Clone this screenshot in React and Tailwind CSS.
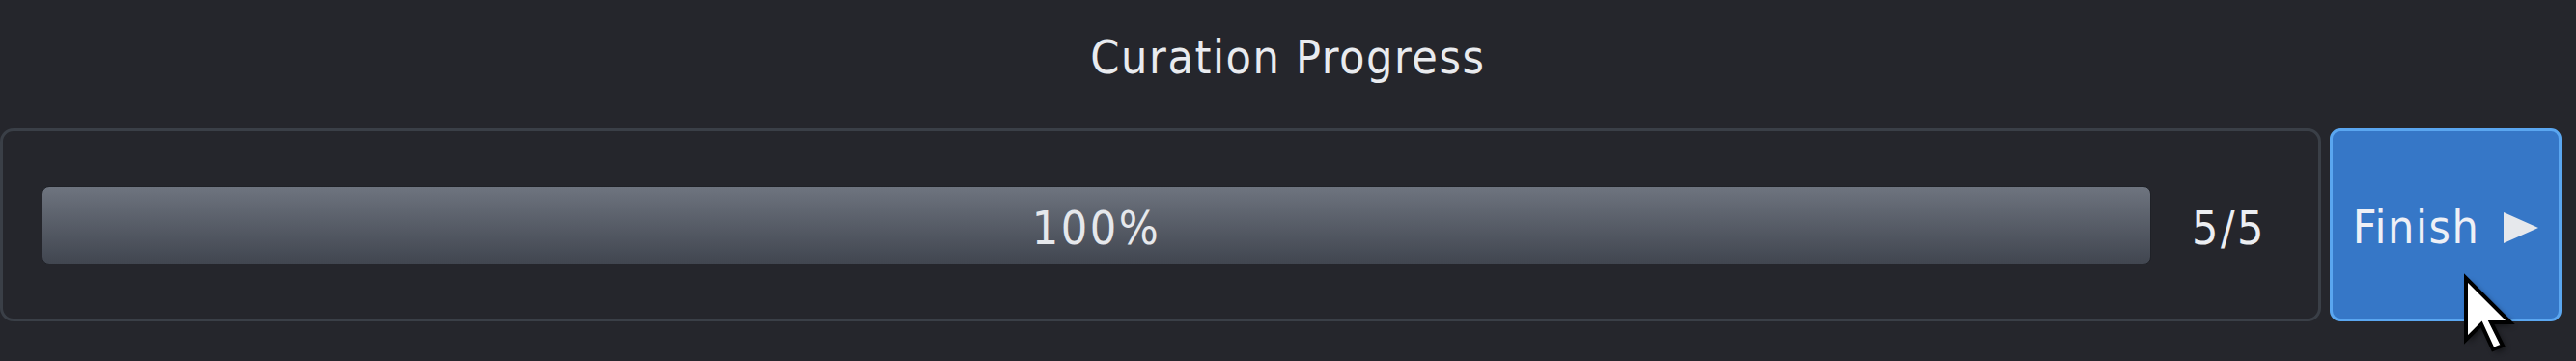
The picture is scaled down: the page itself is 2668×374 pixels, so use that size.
import React from "react";

const font = { fontFamily: "'DejaVu Sans Condensed', 'DejaVu Sans', 'Liberation Sans', sans-serif" };

function Cursor() {
  return (
    <svg
      className="absolute left-[2548px] top-[282px] pointer-events-none"
      width="64"
      height="90"
      viewBox="0 0 64 90"
    >
      <defs>
        <filter id="sh" x="-30%" y="-30%" width="160%" height="160%">
          <feGaussianBlur stdDeviation="3" />
        </filter>
      </defs>
      <polygon
        points="9,9 9,73 25,57 37,83 47,79 35,55 55,55"
        fill="#000"
        opacity="0.55"
        filter="url(#sh)"
      />
      <polygon
        points="6,6 6,70 22,54 34,80 44,76 32,52 52,52"
        fill="#ffffff"
        stroke="#000000"
        strokeWidth="4"
        strokeLinejoin="miter"
      />
    </svg>
  );
}

export default function App() {
  return (
    <div className="relative w-[2668px] h-[374px] bg-[#25262c] overflow-hidden" style={font}>
      <div className="h-[133px] pt-[35px] flex justify-center">
        <div className="text-[48px] leading-[48px] tracking-[1.6px] text-[#e9ebef]">Curation Progress</div>
      </div>
      <div className="flex h-[200px] pr-[15px]">
        <div className="flex-1 flex items-center border-[3px] border-[#3a3f47] rounded-[14px] pl-[40px] pr-[52px]">
          <div className="flex-1 h-[81px] rounded-[8px] border border-[#1f2127] bg-gradient-to-b from-[#6e747f] to-[#414650] flex items-center justify-center pt-[6px]">
            <span className="text-[48px] leading-[48px] tracking-[2.5px] text-[#e6e8ec]">100%</span>
          </div>
          <div className="ml-[42px] w-[79px] pt-[6px] text-[48px] leading-[48px] tracking-[2.5px] text-[#eceef2]">5/5</div>
        </div>
        <div className="ml-[9px] w-[240px] border-[3px] border-[#5aa6f0] bg-[#3677c7] rounded-[11px] flex items-center justify-center gap-[25px] pt-[4px]">
          <span className="text-[48px] leading-[48px] tracking-[1.5px] text-[#eef0f6]">Finish</span>
          <svg width="36" height="32" viewBox="0 0 36 32" className="mt-[2px]">
            <polygon points="0,0 36,16 0,32" fill="#e6e8ec" />
          </svg>
        </div>
      </div>
      <Cursor />
    </div>
  );
}
